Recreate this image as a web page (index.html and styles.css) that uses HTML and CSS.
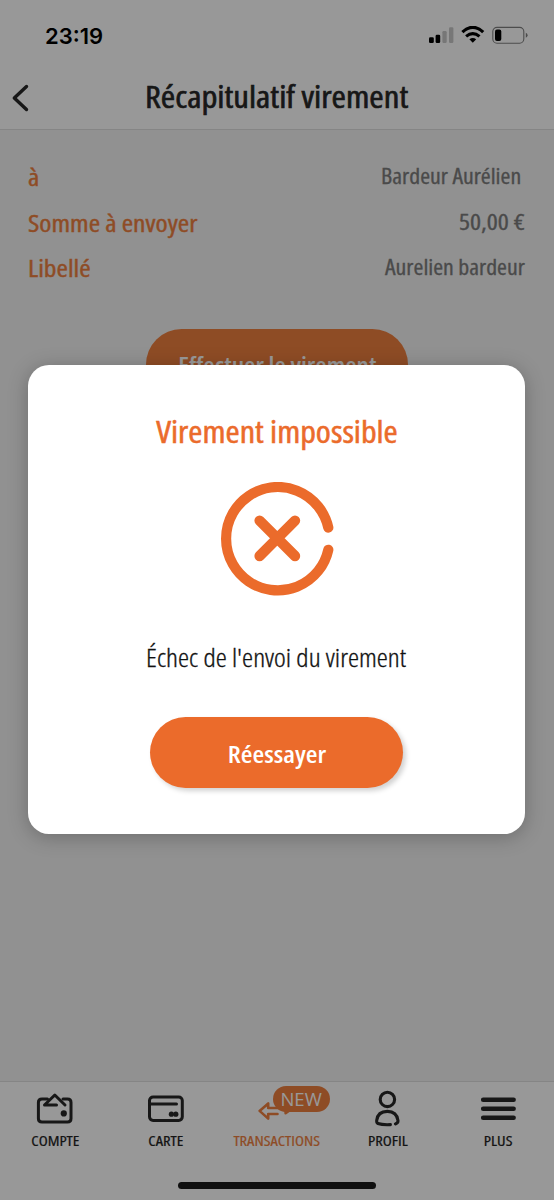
FILE: index.html
```
<!DOCTYPE html>
<html lang="fr">

<head>
    <meta charset="utf-8" />
    <title>Récapitulatif virement</title>
    <link rel="stylesheet" href="styles.css">
</head>

<body>
    <div class="app">
        <header class="header">
            <div class="status">
                <span class="heure">23:19</span>
                <svg class="statusIcons" width="100" height="20" viewBox="0 0 100 20">
                    <rect x="0" y="11.3" width="4.8" height="5.7" rx="1.3" />
                    <rect x="6.6" y="8.8" width="4.6" height="8.2" rx="1.3" />
                    <rect x="13.4" y="5" width="4.3" height="12" rx="1.2" opacity="0.22" />
                    <rect x="20" y="1.2" width="4.4" height="15.8" rx="1.2" opacity="0.22" />
                    <path d="M33.4 6.1 Q43.8 -3.3 54.2 6.1" fill="none" stroke="#000" stroke-width="3.3" stroke-linecap="butt" />
                    <path d="M37.1 10.4 Q43.8 4.7 50.5 10.4" fill="none" stroke="#000" stroke-width="3.1" />
                    <path d="M40.4 13.2 Q43.8 10.8 47.2 13.2 L43.8 16.8 Z" />
                    <rect x="63.8" y="1.4" width="31" height="15.8" rx="4.2" fill="none" stroke="#000" stroke-width="1.1" opacity="0.5" />
                    <rect x="66" y="3.4" width="6.3" height="11.7" rx="2" />
                    <path d="M96.8 6.8 Q98.6 7.6 98.6 9.3 Q98.6 11 96.8 11.8 Z" opacity="0.5" />
                </svg>
            </div>
            <div class="titleBar">
                <svg class="retour" width="18" height="28" viewBox="0 0 18 28">
                    <path d="M15.5 2.5 L3.3 14 L15.5 25.5" fill="none" stroke="#272727" stroke-width="3.4" stroke-linecap="round" stroke-linejoin="round" />
                </svg>
                <h1 class="title"><span class="t">Récapitulatif virement</span></h1>
            </div>
        </header>

        <main class="content">
            <dl class="recap">
                <div class="ligne">
                    <dt><span class="t">à</span></dt>
                    <dd class="nom"><span class="t">Bardeur Aurélien</span></dd>
                </div>
                <div class="ligne">
                    <dt><span class="t">Somme à envoyer</span></dt>
                    <dd class="montant"><span class="t">50,00 €</span></dd>
                </div>
                <div class="ligne">
                    <dt><span class="t">Libellé</span></dt>
                    <dd><span class="t">Aurelien bardeur</span></dd>
                </div>
            </dl>
            <button class="button effectuer"><span class="t">Effectuer le virement</span></button>
        </main>

        <nav class="tabs">
            <a class="tab">
                <svg width="40" height="38" viewBox="0 0 40 38" fill="none" stroke="#272727" stroke-width="3" stroke-linecap="round" stroke-linejoin="round">
                    <path d="M12.5 10 H7 Q3.4 10 3.4 13.4 V29.4 Q3.4 33 7 33 H32.5 Q36 33 36 29.4 V13.4 Q36 10 32.5 10 H28" />
                    <path d="M21.5 16 H9.5 L19.8 6 L30 16" />
                    <circle cx="28.8" cy="24.4" r="3.1" fill="#272727" stroke="none" />
                </svg>
                <span class="t">COMPTE</span>
            </a>
            <a class="tab">
                <svg width="40" height="38" viewBox="0 0 40 38" fill="none" stroke="#272727" stroke-width="3" stroke-linecap="round">
                    <rect x="3.5" y="8" width="32.8" height="23.4" rx="3.6" />
                    <path d="M4 15 H30.5" />
                    <circle cx="25.4" cy="25.2" r="2.6" fill="#272727" stroke="none" />
                    <circle cx="29.8" cy="25.2" r="2.6" fill="#272727" stroke="none" />
                </svg>
                <span class="t">CARTE</span>
            </a>
            <a class="tab active">
                <svg width="40" height="38" viewBox="0 0 40 38" fill="none" stroke="#ed7f3f" stroke-width="2.6" stroke-linecap="round" stroke-linejoin="round">
                    <path d="M20.5 25 H11.2 V29.6 L2.6 21.9 L11.2 14.4 V19 H21" />
                    <path d="M28.6 22 V24.2 L32.5 21.5" />
                </svg>
                <span class="badge">NEW</span>
                <span class="t">TRANSACTIONS</span>
            </a>
            <a class="tab">
                <svg width="40" height="38" viewBox="0 0 40 38" fill="none" stroke="#272727" stroke-width="3.1" stroke-linecap="round">
                    <circle cx="19.4" cy="10.4" r="7.2" />
                    <path d="M22.4 35.6 Q14.4 36 9.9 34.5 Q8.5 34 8.7 31.4 C9.4 25.6 13.4 22.4 19.4 22.4 C25.4 22.4 29.2 25.8 30 31.6 Q30.2 34 27.4 34.9" />
                </svg>
                <span class="t">PROFIL</span>
            </a>
            <a class="tab">
                <svg width="40" height="38" viewBox="0 0 40 38" stroke="#272727" stroke-width="4.6" stroke-linecap="round">
                    <path d="M4.2 10.8 H34.6 M4.2 19.8 H34.6 M4.2 28.8 H34.6" />
                </svg>
                <span class="t">PLUS</span>
            </a>
        </nav>
        <div class="homeBar"></div>
    </div>

    <div class="overlay">
        <section class="modal">
            <h2 class="modalTitle"><span class="t">Virement impossible</span></h2>
            <svg class="echec" width="114" height="114" viewBox="0 0 114 114" fill="none" stroke="#eb6b2b" stroke-linecap="round">
                <path d="M107.3 45.6 A51.7 51.7 0 1 0 107.3 67.8" stroke-width="10.2" />
                <path d="M38.6 38.6 L74 74 M74 38.6 L38.6 74" stroke-width="10.4" />
            </svg>
            <p class="message"><span class="t">Échec de l'envoi du virement</span></p>
            <button class="button reessayer"><span class="t">Réessayer</span></button>
        </section>
    </div>
</body>

</html>
```
FILE: styles.css
```
* {
    box-sizing: border-box;
}

body {
    margin: 0;
    font-family: "Open Sans", "Noto Sans", sans-serif;
    font-stretch: 75%;
    color: #272727;
}

.app {
    display: flex;
    flex-direction: column;
    width: 554px;
    height: 1200px;
    background-color: #f2f2f2;
}

/* condensed face, widened a little per element */
.t {
    display: inline-block;
    white-space: nowrap;
}

.header {
    height: 130px;
    background-color: #fefefe;
    border-bottom: 1px solid #dedede;
}

.status {
    display: flex;
    justify-content: space-between;
    height: 66px;
    padding: 26px 25px 0 45px;
}

.heure {
    font-family: "Inter", sans-serif;
    font-stretch: 100%;
    font-size: 22px;
    font-weight: 600;
    line-height: 20px;
    color: #000;
}

.titleBar {
    display: grid;
    grid-template-columns: 40px 1fr 40px;
    align-items: center;
    height: 62px;
}

.retour {
    margin: 2px 0 0 11px;
}

.title {
    margin: 0;
    text-align: center;
    font-size: 30px;
    font-weight: 500;
    line-height: 40px;
    -webkit-text-stroke: 0.6px currentColor;
}

.title .t {
    transform: scaleX(1.158);
}

.content {
    flex: 1;
}

.recap {
    margin: 0;
    padding: 27px 29px 0 28px;
}

.ligne {
    display: flex;
    justify-content: space-between;
    height: 45.5px;
    line-height: 40px;
}

.ligne dt {
    font-size: 24px;
    font-weight: 500;
    color: #ed7f3f;
    -webkit-text-stroke: 0.4px currentColor;
}

.ligne dt .t {
    transform: scaleX(1.15);
    transform-origin: left;
}

.ligne dd {
    margin: -2px 0 0;
    font-size: 22px;
    font-weight: 500;
    color: #7c7c7c;
    -webkit-text-stroke: 0.3px currentColor;
}

.ligne dd .t {
    transform: scaleX(1.085);
    transform-origin: right;
}

.ligne .nom {
    padding-right: 4px;
}

.ligne .montant .t {
    transform: scaleX(1.18);
}

.button {
    display: block;
    height: 71px;
    padding: 0;
    border: none;
    border-radius: 36px;
    font-family: inherit;
    font-stretch: inherit;
    font-size: 24px;
    font-weight: 600;
    color: #fff;
}

.button .t {
    transform: scaleX(1.12);
}

.effectuer {
    width: 262px;
    margin: 35px auto 0;
    background-color: #ed7f3f;
}

.effectuer .t {
    transform: scaleX(1.085);
}

.tabs {
    display: grid;
    grid-template-columns: repeat(5, 1fr);
    height: 101px;
    padding-top: 7px;
    background-color: #fefefe;
    border-top: 1px solid #dedede;
}

.tab {
    position: relative;
    display: flex;
    flex-direction: column;
    align-items: center;
    font-size: 14px;
    font-weight: 500;
    line-height: 28px;
    color: #222;
    -webkit-text-stroke: 0.2px currentColor;
}

.tab .t {
    transform: scaleX(1.18);
}

.active {
    color: #ed7f3f;
}

.badge {
    position: absolute;
    left: 51px;
    top: -3px;
    width: 57px;
    height: 26px;
    border-radius: 13px;
    background-color: #ed7f3f;
    text-align: center;
    font-stretch: 100%;
    font-size: 18.5px;
    font-weight: 400;
    line-height: 26px;
    color: #fff;
    -webkit-text-stroke: 0;
}

.homeBar {
    width: 554px;
    height: 18px;
    background-color: #fefefe;
}

.homeBar::before {
    content: "";
    display: block;
    width: 198px;
    height: 7px;
    margin: 0 auto;
    border-radius: 4px;
    background-color: #1c1c1c;
}

.overlay {
    position: absolute;
    left: 0;
    top: 0;
    width: 554px;
    height: 1200px;
    padding: 365px 29px 0 28px;
    background-color: rgba(0, 0, 0, 0.4);
}

.modal {
    display: flex;
    flex-direction: column;
    align-items: center;
    height: 469px;
    padding-top: 47px;
    border-radius: 21px;
    background-color: #fff;
    box-shadow: 0 3px 20px rgba(0, 0, 0, 0.25);
}

.modalTitle {
    margin: 0;
    font-size: 30px;
    font-weight: 500;
    line-height: 40px;
    color: #eb6b2b;
    -webkit-text-stroke: 0.5px currentColor;
}

.modalTitle .t {
    transform: scaleX(1.14);
}

.echec {
    margin: 30px 0 0 2px;
}

.message {
    margin: 41px 0 0;
    font-size: 25px;
    font-weight: 300;
    line-height: 40px;
    color: #111;
    -webkit-text-stroke: 0.3px currentColor;
}

.message .t {
    transform: scaleX(1.12);
}

.reessayer {
    width: 253px;
    margin-top: 40px;
    padding-top: 2px;
    background-color: #eb6b2b;
    box-shadow: 3px 3px 5px rgba(0, 0, 0, 0.18);
}
```
